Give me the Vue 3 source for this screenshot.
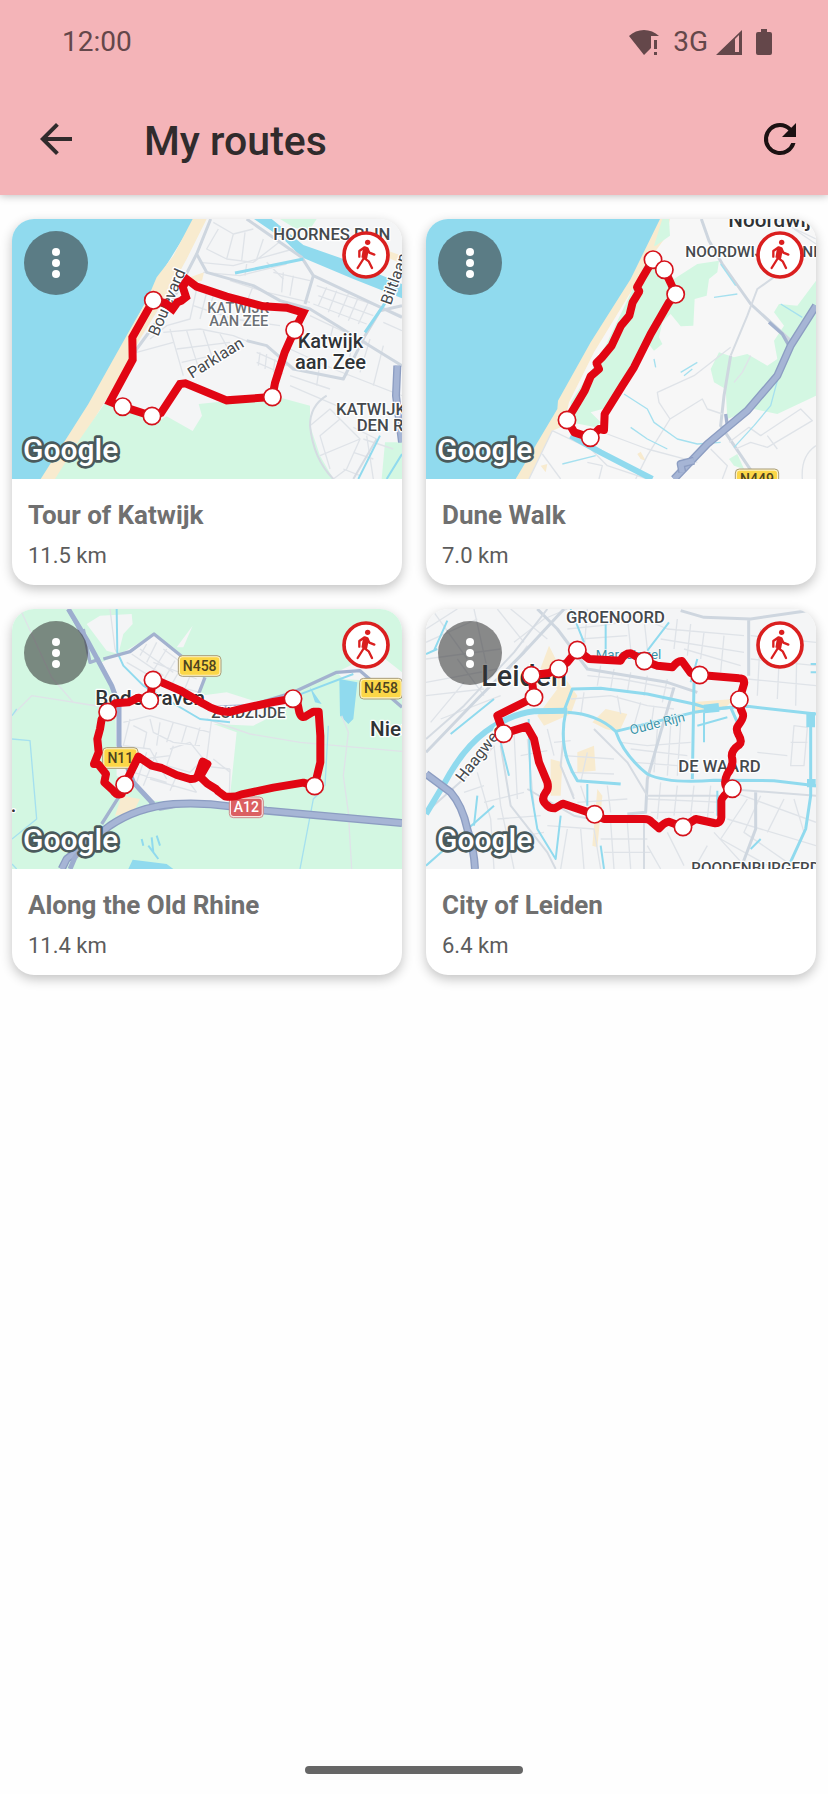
<template>
  <div class="screen">
    <header class="app-header">
      <div class="status-bar">
        <span class="clock">12:00</span>
        <div class="status-icons">
          <svg class="wifi" viewBox="0 0 30 26" aria-hidden="true">
            <path d="M0 7C8-1 22-1 30 7H22V19L15 26Z" />
            <path d="M25 11h3v9h-3zM25 23h3v3h-3z" />
          </svg>
          <span class="network">3G</span>
          <svg class="signal" viewBox="0 0 26 26" aria-hidden="true">
            <path fill-rule="evenodd" d="M0 26L26 1V26ZM19 10V23H23V6Z" />
          </svg>
          <svg class="battery" viewBox="0 0 16 26" aria-hidden="true">
            <path d="M5 0h6v3h3q2 0 2 2v19q0 2-2 2H2q-2 0-2-2V5q0-2 2-2h3z" />
          </svg>
        </div>
      </div>
      <div class="toolbar">
        <button class="icon-button back" type="button" aria-label="Back">
          <svg viewBox="0 0 24 24"><path d="M20 11H7.83l5.59-5.59L12 4l-8 8 8 8 1.41-1.41L7.83 13H20v-2z" /></svg>
        </button>
        <h1>My routes</h1>
        <button class="icon-button refresh" type="button" aria-label="Refresh">
          <svg viewBox="0 0 24 24">
            <path d="M17.65 6.35A7.96 7.96 0 0 0 12 4a8 8 0 1 0 7.73 10h-2.08A6 6 0 1 1 12 6c1.66 0 3.14.69 4.22 1.78L13 11h7V4l-2.35 2.35z" />
          </svg>
        </button>
      </div>
    </header>

    <main class="route-grid">
      <article v-for="route in routes" :key="route.name" class="card">
        <div class="map">
          <svg class="map-canvas" viewBox="36 30 1170 780" preserveAspectRatio="xMidYMid slice">
            <rect x="36" y="30" width="1170" height="780" :class="route.base" />
            <path v-for="(a, i) in route.areas" :key="'a' + i" :class="a.kind" :d="a.d" />
            <g v-for="(l, i) in route.lines" :key="'l' + i" class="line">
              <path v-if="l.kind === 'highway'" class="highway-edge" :d="l.d" />
              <path :class="l.kind" :d="l.d" />
            </g>
            <text
              v-for="(t, i) in route.labels"
              :key="'t' + i"
              :class="['label', t.kind]"
              :transform="`translate(${t.x} ${t.y}) rotate(${t.turn || 0})`"
            >{{ t.text }}</text>
            <g v-for="(s, i) in route.shields" :key="'s' + i" :class="['shield', s.kind]">
              <rect class="shield-rim" :x="s.x" :y="s.y" :width="s.w" height="62" rx="12" />
              <rect class="shield-face" :x="s.x + 5" :y="s.y + 5" :width="s.w - 10" height="52" rx="8" />
              <text :x="s.x + s.w / 2" :y="s.y + 45">{{ s.text }}</text>
            </g>
            <path :class="['track', { rounded: route.rounded }]" :d="route.track" />
            <circle v-for="(p, i) in route.stops" :key="'p' + i" class="stop" :cx="p[0]" :cy="p[1]" r="26" />
            <text class="google" x="69" y="753">Google</text>
          </svg>
          <button class="menu-button" type="button" :aria-label="'Options for ' + route.name">
            <svg viewBox="0 0 64 64">
              <circle cx="32" cy="21" r="4" />
              <circle cx="32" cy="32" r="4" />
              <circle cx="32" cy="43" r="4" />
            </svg>
          </button>
          <svg class="walk-badge" viewBox="0 0 144 144" role="img" aria-label="Walking route">
            <circle class="badge-disc" cx="72" cy="72" r="66" />
            <circle class="badge-head" cx="77" cy="34" r="8" />
            <path class="badge-body" d="M52 77V60L68 49L76 52L82 65L97 71" />
            <path class="badge-torso" d="M70 52L65 81" />
            <path class="badge-body" d="M69 58L64 84L47 111M65 80L80 91L90 111M77 56L72 82" />
          </svg>
        </div>
        <div class="card-text">
          <h2>{{ route.name }}</h2>
          <p>{{ route.distance }}</p>
        </div>
      </article>
    </main>

    <footer class="nav-bar"><span class="nav-handle"></span></footer>
  </div>
</template>

<script setup>
const routes = [
  {
    name: 'Tour of Katwijk',
    distance: '11.5 km',
    base: 'land',
    areas: [
      { kind: 'sea', d: 'M36 30H585L470 215L405 340L335 465L265 590L125 810H36Z' },
      { kind: 'sand', d: 'M578 30H620L560 150L500 260L420 390L350 520L240 700L168 810H122L265 585L335 460L405 335L440 275L470 205L520 140Z' },
      { kind: 'park', d: 'M330 560L380 590L470 640L500 622L578 666L606 620L596 585L690 575L820 560L930 590L930 650L960 740L1000 810H165L240 690Z' },
      { kind: 'park', d: 'M840 30H950L925 68L880 55Z' },
      { kind: 'park', d: 'M1155 700H1206V810H1145Z' },
      { kind: 'sand', d: 'M1120 110L1206 140V165L1130 130Z' },
      { kind: 'sand', d: 'M570 205L612 190L606 215L570 222Z' },
      { kind: 'sea', d: 'M762 30H815L910 108L1030 150L1206 225V268L1060 210L905 145L850 90Z' },
    ],
    lines: [
      { kind: 'street', d: 'M640 40L700 75L760 60M655 60L620 120L680 150L760 160L850 90M700 75L680 150M735 70L725 155M790 90L770 150M600 160L700 170L880 120M610 190L720 200L860 165M740 165L735 200M800 160L850 210' },
      { kind: 'street', d: 'M690 215L800 250L930 280M760 230L740 280M820 190L930 215M850 190L845 250M880 200L870 260M950 230L1130 290M955 260L1120 320M940 285L1100 345M980 235L955 290M1010 245L985 310M1045 255L1015 325M1075 265L1045 335M1105 280L1075 345M1160 300L1206 320M1150 340L1206 365' },
      { kind: 'street', d: 'M590 240L570 330L500 350L450 390M580 290L700 330L840 350M620 250L600 330M490 370L600 360L700 380L750 400M510 360L550 500M560 365L600 490M610 365L640 455M660 375L690 430M530 420L690 400M545 460L680 430M770 430L860 470M770 460L850 495M780 430L775 470M800 435L795 480M825 450L820 490' },
      { kind: 'street', d: 'M870 420L1000 480L1206 560M870 500L990 540M1110 390L1080 490M1060 380L1040 500M1150 410L1120 530M960 460L950 530M870 530L1010 590M930 320L1100 400M1000 350L990 390M410 430L520 400M640 260L630 290' },
      { kind: 'street', d: 'M930 650L990 600L1080 690L1040 780L1000 810M960 740L1080 690M990 780L960 680L1020 630M1090 690L1180 720M1100 680L1120 810M1060 730L1120 750M1060 655L1130 690M1030 780L1080 800' },
      { kind: 'road', d: 'M632 30L590 135L620 190L760 230L840 275L930 300L1206 470' },
      { kind: 'road', d: 'M590 135L520 270L410 420L360 520' },
      { kind: 'road', d: 'M740 30L905 145L940 200L1206 325M940 200L915 285M1206 290L1140 305L1095 380L1030 510L880 480L800 410L740 395' },
      { kind: 'road-thin', d: 'M930 650Q930 590 980 560M930 650Q940 750 1000 810M1060 810L1130 690' },
      { kind: 'canal', d: 'M705 192L910 150M1095 370L1150 290L1195 210' },
      { kind: 'stream', d: 'M1075 810L1140 680M1160 810L1206 735' },
      { kind: 'highway', d: 'M1192 470L1188 560L1206 700' },
    ],
    labels: [
      { kind: 'district', x: 820, y: 94, text: 'HOORNES RIJN' },
      { kind: 'street-name', x: 474, y: 384, turn: -67, text: 'Boulevard' },
      { kind: 'street-name', x: 1172, y: 290, turn: -70, text: 'Biltlaan' },
      { kind: 'district soft', x: 622, y: 311, text: 'KATWIJK' },
      { kind: 'district soft', x: 628, y: 350, text: 'AAN ZEE' },
      { kind: 'street-name', x: 576, y: 510, turn: -32, text: 'Parklaan' },
      { kind: 'town', x: 893, y: 417, text: 'Katwijk' },
      { kind: 'town', x: 885, y: 479, text: 'aan Zee' },
      { kind: 'district', x: 1008, y: 619, text: 'KATWIJK' },
      { kind: 'district', x: 1070, y: 667, text: 'DEN RIJN' },
    ],
    shields: [],
    rounded: false,
    track: 'M460 274L397 385L398 452L330 578L368 593L456 621L483 612L540 525L556 523L680 574L817 564L825 522L854 430L884 363L910 311L860 296L790 292L680 263L590 233L562 212L548 233L558 264L544 275L532 280L518 300L495 282Z',
    stops: [[460, 274], [368, 593], [456, 621], [817, 564], [884, 363]],
  },
  {
    name: 'Dune Walk',
    distance: '7.0 km',
    base: 'land-light',
    areas: [
      { kind: 'sea', d: 'M36 30H745L650 220L550 380L435 590L430 625L308 810H36Z' },
      { kind: 'sand', d: 'M738 30H768L755 85L700 160L650 250L540 430L465 580L450 650L415 665L345 810H305L430 600L432 575L530 400L650 210Z' },
      { kind: 'park', d: 'M725 110L768 80L765 30H745L720 110ZM690 170L755 170L780 210L850 165L915 155L910 190L885 210L878 260L842 270L838 350L800 352L770 315L745 340L735 385L745 405L720 425L700 400L600 590L530 610L560 640L545 655L470 640L470 580L560 440Z' },
      { kind: 'park', d: 'M1206 215L1150 290L1095 285L1080 310L1110 350L1080 395L1090 450L1060 470L1000 435L960 445L915 430L890 480L900 520L935 540L940 630L1020 600L1090 615L1206 560Z' },
      { kind: 'park', d: 'M945 750L970 735L990 780L960 770Z' },
      { kind: 'sand', d: 'M670 735L680 728L695 755L680 750ZM380 770L400 765L395 790Z' },
    ],
    lines: [
      { kind: 'road', d: 'M862 30L885 95L925 165L1010 285L1130 395M950 440L930 560L920 650L1015 790' },
      { kind: 'road-thin', d: 'M1100 190L1030 240L1000 320L950 440' },
      { kind: 'street', d: 'M950 415L840 500L730 550L735 580L768 630L865 570L880 600L925 615M768 630L700 740L665 810M580 675L700 720L850 760M415 665L530 720L580 770L700 810M415 665L345 810M385 735L440 810M555 810L565 770L520 760M890 720L940 770L925 810' },
      { kind: 'street', d: 'M945 700L1005 655L1040 680L1160 600L1195 635L1060 715L1010 700L965 720M1060 680L1090 720M1206 710Q1160 740 1165 810M1140 60L1206 105M1080 30L1206 90' },
      { kind: 'street', d: 'M1010 440L985 490L960 520' },
      { kind: 'brook', d: 'M630 555L700 600L720 640L790 690L850 705L920 700M650 655L700 690L760 720M445 765L545 740M1090 515L1070 590L1020 650L960 715M720 450L725 475M800 490L850 460M810 500L835 480M920 165L965 230M970 255L900 265M1100 285L1165 325' },
      { kind: 'canal-wide', d: 'M470 680L560 730L715 810' },
      { kind: 'road-dark', d: 'M1065 340L1105 375L1125 410M935 615L940 650' },
      { kind: 'highway', d: 'M1206 290L1130 410L1090 500L1000 605L880 705L780 810' },
      { kind: 'highway', d: 'M840 755L800 765L805 790' },
    ],
    labels: [
      { kind: 'city-small', x: 943, y: 54, text: 'Noordwijk' },
      { kind: 'district small', x: 814, y: 144, text: 'NOORDWIJK-BINNEN' },
    ],
    shields: [{ kind: 'yellow', x: 964, y: 780, w: 130, text: 'N449' }],
    rounded: true,
    track: 'M717 152L686 205L669 235L676 247L656 280L646 320L621 350L593 410L564 445L547 462L555 480L530 502L512 545L491 580L476 605L459 633L481 670L529 686L555 660L570 663L572 615L625 530L660 475L710 375L765 280L785 256L770 222L751 182Z',
    stops: [[717, 152], [751, 182], [785, 256], [459, 633], [529, 686]],
  },
  {
    name: 'Along the Old Rhine',
    distance: '11.4 km',
    base: 'field',
    areas: [
      { kind: 'land', d: 'M300 50L395 45L398 75L370 105L355 165L320 155L260 75Z' },
      { kind: 'land', d: 'M305 190L370 160L462 105L555 180L610 240L600 290L680 280L760 305L870 300L850 335L760 380L640 375L710 400L688 610L460 605L400 565L350 530L345 270Z' },
      { kind: 'land', d: 'M530 145L578 80L550 145ZM1010 220L1130 160L1206 220V280L1110 245L1030 240Z' },
      { kind: 'sand', d: 'M365 590L420 600L400 640L345 650Z' },
      { kind: 'sea', d: 'M1018 240L1072 250L1060 360L1045 375L1020 350ZM398 782L500 795L520 810H385ZM930 265L965 315L945 310Z' },
    ],
    lines: [
      { kind: 'street', d: 'M65 40L155 235L220 310L345 330M36 350L95 290L350 330M330 30L345 150L350 160M620 360L750 405L900 430L1206 457M1025 350L1045 400L1030 530L1045 640L1055 810' },
      { kind: 'street', d: 'M395 165L490 230M420 150L520 220M380 190L500 260M440 135L420 170M470 130L440 190M500 150L460 215M525 185L490 245M550 195L510 265M575 220L550 280M460 190L590 240M490 150L590 225M520 260L600 280' },
      { kind: 'street', d: 'M370 370L450 350L520 370L630 400M390 360L370 440L450 450L500 540M400 380L440 400L430 450M450 360L460 400L520 430L600 440M480 370L470 440M520 370L500 430M560 380L545 430M600 385L585 440M635 360L620 480M440 460L410 550M470 460L430 560M370 460L430 480L510 470M510 450L570 430L610 480L570 520L500 500L520 440M640 480L690 520M600 500L690 510M560 540L590 580M530 530L510 575M450 540L590 580M400 520L500 550M690 510L688 590' },
      { kind: 'brook', d: 'M36 420L90 425L110 660L36 720M970 570L940 600L900 810M975 560L985 380M36 350L50 330M36 795L50 810' },
      { kind: 'stream', d: 'M350 30L352 160L370 200L430 260L600 360L690 370M425 720L430 740M445 740L475 780M455 715L460 760M470 710L480 740' },
      { kind: 'road-dark', d: 'M310 180L390 158L462 105L555 180M615 235L590 300L630 325L750 320L880 280L1010 220L1080 215L1206 325M540 620L480 630L450 610' },
      { kind: 'stream', d: 'M890 290L1060 225' },
      { kind: 'road-dark', d: 'M305 675L365 580L365 545M250 90L270 190L300 180M205 30L240 95' },
      { kind: 'highway-small', d: 'M205 30L265 130L335 260L357 320L357 440L400 550L460 615' },
      { kind: 'highway', d: 'M185 810L200 780L330 680Q410 625 520 615Q610 610 690 622L800 635L1206 672' },
      { kind: 'highway-small', d: 'M280 710L225 775L210 810' },
    ],
    labels: [
      { kind: 'city-small', x: 286, y: 319, text: 'Bodegraven' },
      { kind: 'district small', x: 634, y: 357, text: 'ZUIDZIJDE' },
      { kind: 'city-small', x: 1110, y: 410, text: 'Nieuwer' },
      { kind: 'town', x: 32, y: 640, text: '.' },
    ],
    shields: [
      { kind: 'yellow', x: 535, y: 170, w: 128, text: 'N458' },
      { kind: 'yellow', x: 1079, y: 238, w: 128, text: 'N458' },
      { kind: 'yellow', x: 308, y: 446, w: 106, text: 'N11' },
      { kind: 'red', x: 688, y: 594, w: 102, text: 'A12' },
    ],
    rounded: true,
    track: 'M459 243L480 248L540 274L610 314Q650 339 688 339L740 326L820 309L879 299L893 315L898 340Q905 362 920 350L940 338H956L961 410V490L944 561L910 551L820 566L725 586Q700 597 675 592L655 577L648 570L622 554L600 533L622 495L608 488L594 528Q590 542 570 540L530 528L485 507L455 500L415 473L374 557L365 585Q350 590 340 575L313 550L318 525L294 495H282L296 460L292 420L300 390L305 360L323 339L345 313L385 310L415 296L449 304Z',
    stops: [[459, 243], [449, 304], [323, 339], [879, 299], [944, 561], [374, 557]],
  },
  {
    name: 'City of Leiden',
    distance: '6.4 km',
    base: 'land',
    areas: [
      { kind: 'sand', d: 'M405 140L455 240L490 290L470 345L390 380L370 350L430 270L375 220ZM535 370L575 330L640 345L615 400L575 390ZM410 480L445 490L440 590L410 590ZM490 460L540 440L545 515L490 520ZM830 310L960 300L930 330L840 345ZM550 570L565 590L550 745L535 740Z' },
    ],
    lines: [
      { kind: 'street', d: 'M36 90L130 30M36 130L190 60M36 180L260 150M36 250L250 210M80 360L260 290M60 40L160 180M180 30L220 210M130 180L210 290M250 30L330 130M290 30L400 120M300 130L390 60L460 30M340 140L250 260M36 290L210 270M50 370L150 250' },
      { kind: 'street', d: 'M460 90L560 80L690 60L760 90L990 110M520 30L510 160M640 50L650 150M690 60L700 150M790 60L780 150M830 75L820 170M870 100L860 180M930 110L920 220M500 120L640 110M740 120L990 160M810 150L980 200M1010 110L1206 130M1010 180L1206 200M1040 90L1030 290M1100 80L1090 300M1150 90L1145 320M1206 260L1000 240' },
      { kind: 'street', d: 'M520 230L620 240L780 270M560 200L550 260M600 210L590 270M650 220L640 280M700 230L690 290M760 240L745 310M470 300L590 290L700 320L780 330M510 280L500 350M610 290L620 345M680 310L660 380M720 320L710 390M620 430L700 440L830 430M650 450L820 470M660 490L790 500M730 390L720 520M770 380L760 530M800 370L790 530' },
      { kind: 'street', d: 'M300 400L310 600M340 420L360 620M320 470L400 455M240 440L260 620L300 810M190 520L230 660L240 810M150 580L210 560M210 610L330 580M250 660L380 650M270 720L390 700M420 430L470 425M400 390L420 470M450 470L600 480M470 520L600 525M500 560L520 620M580 560L590 640M490 610L640 600M440 500L480 590M520 460L500 550' },
      { kind: 'street', d: 'M400 680L540 690L560 810M460 690L440 810M500 690L510 810M590 670L600 810M640 670L650 810M560 720L700 720M570 760L710 760M700 600L930 610M740 550L730 660M790 560L780 650M840 560L830 650M890 560L880 660M710 640L900 640' },
      { kind: 'street', d: 'M1000 600L920 720L1080 810M960 580L1206 670M1040 590L990 700L1120 790M1110 600L1060 700M900 700L1000 810M940 660L1206 740M880 740L840 810M760 700L810 800M700 740L740 810M1140 380L1180 385L1170 500L1130 500ZM1130 430L1180 430M1030 460L1120 470M1140 600L1170 700' },
      { kind: 'road', d: 'M370 30L430 90L520 210L760 250L850 280M450 30L330 160L190 300L36 460M800 35L870 55L1010 60L1180 35M1004 60V230M780 265L740 400L700 540L695 640L640 645M1025 580V690L980 810' },
      { kind: 'road-thin', d: 'M700 590L930 590L940 570L1206 590M260 440L290 620L400 760L425 810M450 400L440 500L480 600M540 390L640 490L700 590M690 650L690 810M400 30L300 160L150 320L36 420M36 640L160 530L240 440M340 570L480 650L580 670' },
      { kind: 'canal-wide', d: 'M36 645L90 555Q145 450 215 398Q290 345 360 337L460 335' },
      { kind: 'canal', d: 'M450 335L475 270L560 268L700 285L840 315L890 330L1000 322L1206 345M460 340Q550 345 605 397Q630 470 700 525Q760 555 900 544L1080 545L1206 560' },
      { kind: 'canal', d: 'M605 397L840 340L950 325L970 370M455 340Q430 450 490 545L620 555M840 250L835 540M1190 345L1190 590L1175 690L1120 810' },
      { kind: 'canal-block', d: 'M1190 340V385M1192 540V565M870 330L915 325' },
      { kind: 'stream', d: 'M344 360L350 570L370 690L425 780L440 650M910 575V650M36 800L240 620M570 810L560 740' },
      { kind: 'stream', d: 'M765 70L700 155M575 75L575 170M510 130L470 30M60 155L100 65M110 405L240 300M260 430L285 530M36 165L70 150M850 180L830 250M850 380L940 355M870 340V430M520 555L520 620M190 590L180 680M1190 195H1206M1190 220H1206M1010 750L1040 720' },
      { kind: 'highway', d: 'M36 525L110 580Q145 620 160 690Q180 750 183 810' },
    ],
    labels: [
      { kind: 'district', x: 456, y: 71, text: 'GROENOORD' },
      { kind: 'city', x: 202, y: 260, text: 'Leiden' },
      { kind: 'water-name', x: 545, y: 181, text: 'Maresingel' },
      { kind: 'water-name', x: 651, y: 407, turn: -14, text: 'Oude Rijn' },
      { kind: 'street-name', x: 148, y: 552, turn: -52, text: 'Haagweg' },
      { kind: 'district', x: 793, y: 518, text: 'DE WAARD' },
      { kind: 'district small', x: 832, y: 823, text: 'ROODENBURGERDISTRICT' },
    ],
    shields: [],
    rounded: true,
    track: 'M352 229L405 222L434 209L460 190L490 153L525 180L620 185Q630 163 650 163L691 186L730 200L775 205Q790 185 804 186L830 222L857 228L975 238Q994 238 990 255L976 302Q976 325 986 343Q992 355 972 380Q964 390 974 408Q986 428 975 438Q950 455 954 475Q960 500 940 525Q930 545 935 560L955 569Q925 590 922 605V655Q920 675 900 672L845 660L807 684L765 668Q750 670 735 688L712 668Q705 660 690 660H570L542 646L446 614L422 628Q405 628 395 615Q380 600 395 580Q405 570 400 550L375 490L360 420L338 382L269 404L250 350L360 295Z',
    stops: [[352, 229], [434, 209], [490, 153], [691, 186], [857, 228], [976, 302], [955, 569], [807, 684], [542, 646], [269, 404], [360, 295]],
  },
]
</script>

<style>
body {
  margin: 0;
  background: #fefefe;
}
</style>

<style scoped>
.screen {
  min-height: 100vh;
  display: flex;
  flex-direction: column;
  font-family: Roboto, "Liberation Sans", sans-serif;
  background: #fefefe;
}
.app-header {
  background: #f4b4b8;
  box-shadow: 0 1px 8px rgba(0, 0, 0, 0.25);
}
.status-bar {
  height: 83px;
  padding: 0 56px 0 62px;
  display: flex;
  align-items: center;
  justify-content: space-between;
  color: #64474a;
  font-size: 28px;
}
.status-icons {
  display: flex;
  align-items: center;
}
.status-icons svg {
  display: block;
  height: 26px;
  fill: #64474a;
}
.wifi {
  width: 30px;
}
.network {
  margin: 0 8px 0 14px;
}
.signal {
  width: 26px;
  margin-right: 14px;
}
.battery {
  width: 16px;
}
.toolbar {
  height: 112px;
  padding: 0 24px 0 32px;
  display: flex;
  align-items: center;
}
.toolbar h1 {
  flex: 1;
  margin: 0 0 0 64px;
  padding-top: 4px;
  font-size: 41px;
  font-weight: 500;
  line-height: 48px;
  color: #302b2c;
}
.icon-button {
  width: 48px;
  height: 48px;
  padding: 0;
  border: none;
  background: none;
  cursor: pointer;
}
.icon-button svg {
  display: block;
  width: 48px;
  height: 48px;
  fill: #302b2c;
}
.refresh svg {
  fill: #1b1112;
}
.route-grid {
  flex: 1;
  display: grid;
  grid-template-columns: 1fr 1fr;
  align-content: start;
  gap: 24px;
  padding: 24px 12px;
}
.card {
  border-radius: 22px;
  overflow: hidden;
  background: #fff;
  box-shadow: 0 4px 12px rgba(0, 0, 0, 0.24);
}
.map {
  position: relative;
}
.map-canvas {
  display: block;
  width: 100%;
  aspect-ratio: 3 / 2;
}
.menu-button {
  position: absolute;
  top: 12px;
  left: 12px;
  width: 64px;
  height: 64px;
  padding: 0;
  border: none;
  border-radius: 50%;
  background: rgba(48, 48, 48, 0.55);
  cursor: pointer;
}
.menu-button svg {
  display: block;
  width: 64px;
  height: 64px;
  fill: #fff;
}
.walk-badge {
  position: absolute;
  top: 12px;
  right: 12px;
  width: 48px;
  height: 48px;
}
.badge-disc {
  fill: #fff;
  stroke: #da1f1f;
  stroke-width: 11;
}
.badge-head {
  fill: #da1f1f;
}
.badge-body {
  fill: none;
  stroke: #da1f1f;
  stroke-width: 7;
  stroke-linejoin: round;
  stroke-linecap: round;
}
.badge-torso {
  stroke: #da1f1f;
  stroke-width: 14;
}
.card-text {
  padding: 20px 16px 14px;
}
.card-text h2 {
  margin: 0;
  font-size: 26px;
  font-weight: 700;
  line-height: 32px;
  color: #707070;
}
.card-text p {
  margin: 10px 0 0;
  font-size: 22px;
  line-height: 30px;
  color: #5c5c5c;
}

/* map areas */
.land {
  fill: #f4f5f6;
}
.land-light {
  fill: #f7f7f7;
}
.sea {
  fill: #90daee;
}
.sand {
  fill: #f8ebcf;
}
.park,
.field {
  fill: #d3f7e2;
}

/* map lines */
.line path {
  fill: none;
  stroke-linejoin: round;
}
.line .street {
  stroke: #dfe3e8;
  stroke-width: 4;
}
.line .road {
  stroke: #ced6df;
  stroke-width: 9;
}
.line .road-thin {
  stroke: #d5dbe2;
  stroke-width: 6;
}
.line .road-dark {
  stroke: #a3b2cf;
  stroke-width: 10;
}
.line .brook {
  stroke: #a5e0ef;
  stroke-width: 4;
}
.line .stream {
  stroke: #90daee;
  stroke-width: 6;
}
.line .canal {
  stroke: #90daee;
  stroke-width: 9;
}
.line .canal-wide {
  stroke: #90daee;
  stroke-width: 18;
}
.line .canal-block {
  stroke: #90daee;
  stroke-width: 26;
}
.line .highway-edge {
  stroke: #8c9dc2;
  stroke-width: 24;
}
.line .highway {
  stroke: #a6b5d5;
  stroke-width: 16;
}
.line .highway-small {
  stroke: #9dadcf;
  stroke-width: 15;
}

/* map lettering */
.label {
  fill: #2f3336;
  stroke: #fff;
  stroke-width: 8;
  stroke-linejoin: round;
  paint-order: stroke;
}
.district {
  font-size: 50px;
  font-weight: 500;
  fill: #45494d;
}
.district.soft {
  font-size: 44px;
  fill: #6b7075;
}
.district.small {
  font-size: 46px;
}
.street-name {
  font-size: 48px;
  fill: #45494d;
}
.town {
  font-size: 60px;
  font-weight: 500;
}
.city-small {
  font-size: 62px;
  font-weight: 500;
}
.city {
  font-size: 86px;
  font-weight: 500;
}
.water-name {
  font-size: 40px;
  fill: #3b93a8;
  stroke-width: 3;
}
.shield text {
  font-size: 42px;
  font-weight: 500;
  text-anchor: middle;
}
.yellow .shield-rim {
  fill: #fff3c2;
  stroke: #a89c78;
  stroke-width: 3;
}
.yellow .shield-face {
  fill: #fbd647;
}
.yellow text {
  fill: #4d4320;
}
.red .shield-rim {
  fill: #fbe3e3;
  stroke: #c98b8b;
  stroke-width: 3;
}
.red .shield-face {
  fill: #db5f62;
}
.red text {
  fill: #fff;
}
.google {
  font-size: 90px;
  font-weight: 500;
  fill: #fff;
  stroke: #4a5a5c;
  stroke-width: 16;
  stroke-linejoin: round;
  paint-order: stroke;
}

/* walked route */
.track {
  fill: none;
  stroke: #e10613;
  stroke-width: 24;
  stroke-linejoin: miter;
}
.track.rounded {
  stroke-linejoin: round;
}
.stop {
  fill: #fff;
  stroke: #d5121b;
  stroke-width: 5;
}
.nav-bar {
  display: flex;
  justify-content: center;
  padding: 20px 0;
}
.nav-handle {
  width: 218px;
  height: 8px;
  border-radius: 4px;
  background: #666;
}
</style>
